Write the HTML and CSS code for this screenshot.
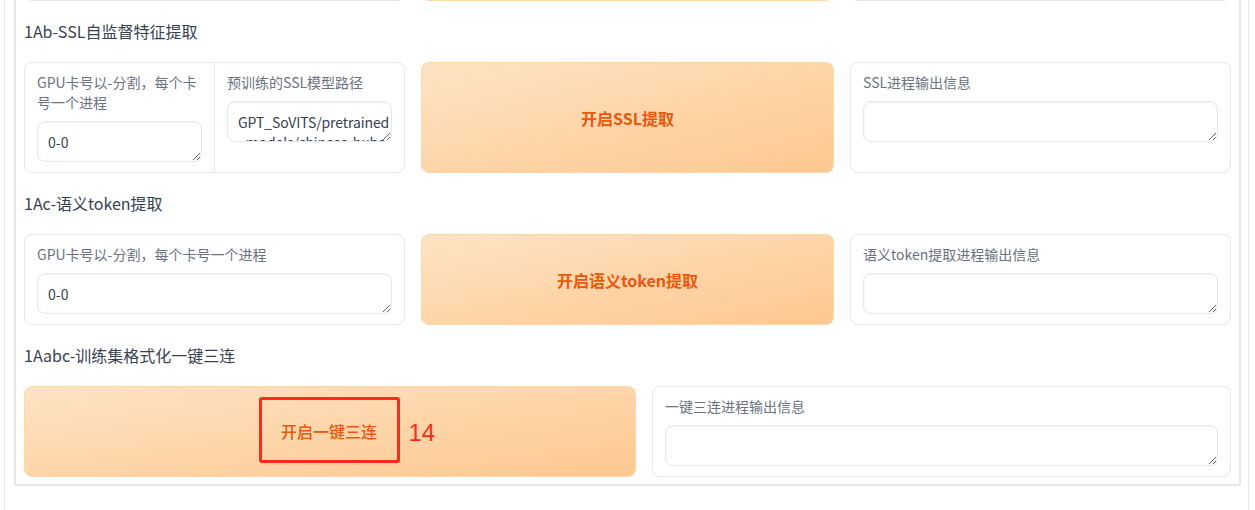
FILE: index.html
```html
<!DOCTYPE html>
<html lang="zh">
<head>
<meta charset="utf-8">
<link rel="stylesheet" href="styles.css">
</head>
<body>
<div class="tab">
  <div class="group">
    <div class="row row-three prev">
      <div class="card split"><div class="col"></div><div class="col"></div></div>
      <div class="btn"></div>
      <div class="card"></div>
    </div>

    <div class="title">1Ab-SSL自监督特征提取</div>
    <div class="row row-three">
      <div class="card split">
        <div class="col">
          <label class="label">GPU卡号以-分割，每个卡号一个进程</label>
          <textarea class="input" rows="1">0-0</textarea>
        </div>
        <div class="col">
          <label class="label">预训练的SSL模型路径</label>
          <textarea class="input input-pre" rows="1">GPT_SoVITS/pretrained
_models/chinese-hubert-base</textarea>
        </div>
      </div>
      <button class="btn">开启SSL提取</button>
      <div class="card">
        <label class="label">SSL进程输出信息</label>
        <textarea class="input" rows="1"></textarea>
      </div>
    </div>

    <div class="title">1Ac-语义token提取</div>
    <div class="row row-three">
      <div class="card">
        <label class="label">GPU卡号以-分割，每个卡号一个进程</label>
        <textarea class="input" rows="1">0-0</textarea>
      </div>
      <button class="btn">开启语义token提取</button>
      <div class="card">
        <label class="label">语义token提取进程输出信息</label>
        <textarea class="input" rows="1"></textarea>
      </div>
    </div>

    <div class="title">1Aabc-训练集格式化一键三连</div>
    <div class="row row-two">
      <button class="btn"><span class="annot">开启一键三连<span class="annot-num">14</span></span></button>
      <div class="card">
        <label class="label">一键三连进程输出信息</label>
        <textarea class="input" rows="1"></textarea>
      </div>
    </div>
  </div>
</div>
</body>
</html>
```

FILE: styles.css
```css
html, body {
  margin: 0;
  padding: 0;
  background: #ffffff;
  overflow: hidden;
  font-family: "Noto Sans CJK SC", "Noto Sans", sans-serif;
}

.tab {
  box-sizing: border-box;
  width: 1245px;
  min-height: 569px;
  margin: -59px 0 0 4px;
  padding: 0 7px 0 9px;
  border-left: 1px solid #e5e7eb;
  border-right: 1px solid #e5e7eb;
}

.group {
  display: flex;
  flex-direction: column;
  gap: 16px;
  border: 2px solid #e5e7eb;
  padding: 8px 8px 7px 8px;
  background: #ffffff;
}

.row {
  display: grid;
  gap: 16px;
}

.row-three {
  grid-template-columns: 381px 413px 381px;
}

.row-two {
  grid-template-columns: 612px 579px;
}

.prev {
  height: 50px;
}

.title {
  height: 29px;
  line-height: 29px;
  font-size: 16px;
  color: #374151;
}

.card {
  box-sizing: border-box;
  border: 1px solid #e5e7eb;
  border-radius: 8px;
  background: #ffffff;
  padding: 9px 12px 10px 12px;
  min-width: 0;
}

.card.split {
  display: flex;
  padding: 0;
}

.col {
  box-sizing: border-box;
  flex: 1 1 0;
  min-width: 0;
  padding: 9px 12px 10px 12px;
}

.col + .col {
  border-left: 1px solid #e5e7eb;
}

.label {
  display: block;
  font-size: 14px;
  line-height: 20px;
  color: #6b7280;
  margin-bottom: 9px;
}

.input {
  display: block;
  box-sizing: border-box;
  width: 100%;
  height: 41px;
  margin: 0;
  padding: 10px;
  border: 1px solid #e5e7eb;
  border-radius: 8px;
  background: #ffffff;
  box-shadow: inset 0 1px 2px rgba(0, 0, 0, 0.05);
  font-family: "Noto Sans CJK SC", "Noto Sans", sans-serif;
  font-size: 14px;
  line-height: 20px;
  color: #374151;
  outline: none;
  overflow: hidden;
}

.input-pre {
  white-space: pre;
  letter-spacing: -0.1px;
}

.btn {
  display: flex;
  align-items: center;
  justify-content: center;
  box-sizing: border-box;
  margin: 0;
  padding: 0;
  border: 1px solid #fed7aa;
  border-radius: 8px;
  background-color: #ffffff;
  background-image: linear-gradient(to bottom right, rgba(254, 215, 170, 0.7), rgba(253, 186, 116, 0.8));
  color: #ea580c;
  font-family: "Noto Sans CJK SC", "Noto Sans", sans-serif;
  font-size: 16px;
  font-weight: 700;
  line-height: 24px;
}

.annot {
  position: relative;
  display: inline-block;
  box-sizing: border-box;
  width: 141px;
  height: 66px;
  padding: 19px 0 0 0;
  border: 3px solid #ff2a1a;
  border-radius: 3px;
  text-align: center;
  font-weight: 500;
  margin: -3px 2px 0 0;
}

.annot-num {
  position: absolute;
  left: calc(100% + 12px);
  top: 19px;
  font-family: "Liberation Sans", sans-serif;
  font-weight: 400;
  font-size: 24px;
  line-height: 28px;
  color: #ff2a1a;
}
```
